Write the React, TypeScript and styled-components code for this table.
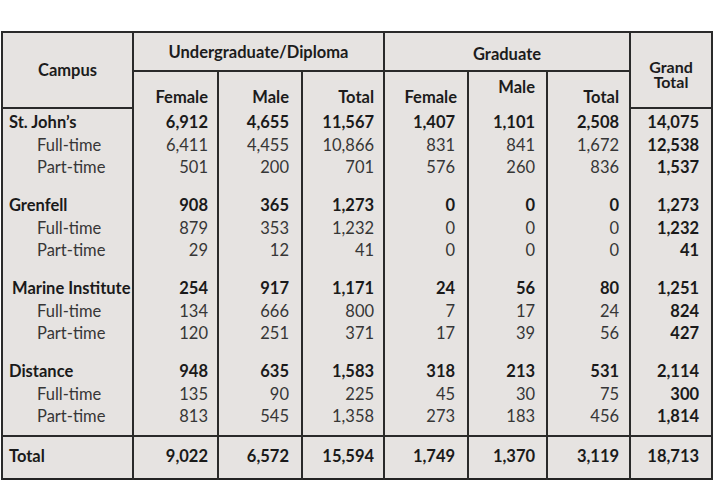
import React from "react";
import styled, { createGlobalStyle } from "styled-components";

const Global = createGlobalStyle`
  html, body { margin: 0; padding: 0; background: #ffffff; }
  body { font-family: Lato, "Open Sans", sans-serif; }
`;

const Page = styled.div`
  padding: 31px 0 0 1px;
`;

const Table = styled.table`
  border-collapse: collapse;
  table-layout: fixed;
  width: 710px;
  background: #e6e3e1;
  border: 2px solid #232323;
  font-size: 16.5px;
  color: #1c1c1c;
`;

const HeadRow = styled.tr<{ $h: number }>`
  height: ${(p) => p.$h}px;
`;

const HeadCell = styled.th<{ $pt?: number }>`
  border: 2px solid #2a2a2a;
  font-weight: 700;
  text-align: center;
  vertical-align: middle;
  padding: ${(p) => p.$pt ?? 0}px 0 0 0;
  line-height: 18px;
`;

const GrandHead = styled(HeadCell)`
  font-size: 16px;
  line-height: 15px;
`;

const SubHead = styled.th<{ $pr: number; $raise?: boolean }>`
  border-left: 2px solid #2a2a2a;
  border-right: 2px solid #2a2a2a;
  font-weight: 700;
  text-align: right;
  vertical-align: bottom;
  padding: 0 ${(p) => p.$pr}px ${(p) => (p.$raise ? 12 : 2)}px 0;
  line-height: 18px;
`;

const Row = styled.tr<{ $h: number }>`
  height: ${(p) => p.$h}px;
`;

const LabelCell = styled.td<{ $indent: number; $bold?: boolean }>`
  border-left: 2px solid #2a2a2a;
  border-right: 2px solid #2a2a2a;
  padding: 0 0 0 ${(p) => p.$indent}px;
  font-weight: ${(p) => (p.$bold ? 700 : 400)};
  color: ${(p) => (p.$bold ? "#1a1a1a" : "#363636")};
  white-space: nowrap;
  line-height: 18px;
`;

const NumCell = styled.td<{ $pr: number; $bold?: boolean }>`
  border-left: 2px solid #2a2a2a;
  border-right: 2px solid #2a2a2a;
  text-align: right;
  padding: 0 ${(p) => p.$pr}px 0 0;
  font-weight: ${(p) => (p.$bold ? 700 : 400)};
  color: ${(p) => (p.$bold ? "#1a1a1a" : "#363636")};
  line-height: 18px;
`;

const TotalRow = styled.tr`
  height: 43px;
  border-top: 2px solid #2a2a2a;
  & > td {
    vertical-align: top;
    padding-top: 10px;
  }
`;

const SpacerCell = styled.td`
  border-left: 2px solid #2a2a2a;
  border-right: 2px solid #2a2a2a;
  padding: 0;
`;

const widths = [131, 85, 84, 82, 84, 79, 83, 82];
const pads = [9, 12, 9, 12, 11, 10, 12];

type Line = { label: string; kind: "main" | "sub"; indent?: number; vals: string[] };

const groups: Line[][] = [
  [
    { label: "St. John\u2019s", kind: "main", vals: ["6,912", "4,655", "11,567", "1,407", "1,101", "2,508", "14,075"] },
    { label: "Full-time", kind: "sub", vals: ["6,411", "4,455", "10,866", "831", "841", "1,672", "12,538"] },
    { label: "Part-time", kind: "sub", vals: ["501", "200", "701", "576", "260", "836", "1,537"] },
  ],
  [
    { label: "Grenfell", kind: "main", vals: ["908", "365", "1,273", "0", "0", "0", "1,273"] },
    { label: "Full-time", kind: "sub", vals: ["879", "353", "1,232", "0", "0", "0", "1,232"] },
    { label: "Part-time", kind: "sub", vals: ["29", "12", "41", "0", "0", "0", "41"] },
  ],
  [
    { label: "Marine Institute", kind: "main", indent: 9, vals: ["254", "917", "1,171", "24", "56", "80", "1,251"] },
    { label: "Full-time", kind: "sub", vals: ["134", "666", "800", "7", "17", "24", "824"] },
    { label: "Part-time", kind: "sub", vals: ["120", "251", "371", "17", "39", "56", "427"] },
  ],
  [
    { label: "Distance", kind: "main", vals: ["948", "635", "1,583", "318", "213", "531", "2,114"] },
    { label: "Full-time", kind: "sub", vals: ["135", "90", "225", "45", "30", "75", "300"] },
    { label: "Part-time", kind: "sub", vals: ["813", "545", "1,358", "273", "183", "456", "1,814"] },
  ],
];

const totals = ["9,022", "6,572", "15,594", "1,749", "1,370", "3,119", "18,713"];

function Spacer({ h }: { h: number }) {
  return (
    <Row $h={h}>
      {widths.map((_, i) => (
        <SpacerCell key={i} />
      ))}
    </Row>
  );
}

export default function App() {
  return (
    <>
      <Global />
      <Page>
        <Table>
          <colgroup>
            {widths.map((w, i) => (
              <col key={i} style={{ width: w }} />
            ))}
          </colgroup>
          <thead>
            <HeadRow $h={39}>
              <HeadCell rowSpan={2}>Campus</HeadCell>
              <HeadCell colSpan={3} $pt={1}>Undergraduate/Diploma</HeadCell>
              <HeadCell colSpan={3} $pt={4}>Graduate</HeadCell>
              <GrandHead rowSpan={2} $pt={8}>
                Grand
                <br />
                Total
              </GrandHead>
            </HeadRow>
            <HeadRow $h={37}>
              <SubHead $pr={pads[0]}>Female</SubHead>
              <SubHead $pr={pads[1]}>Male</SubHead>
              <SubHead $pr={pads[2]}>Total</SubHead>
              <SubHead $pr={pads[3] - 2}>Female</SubHead>
              <SubHead $pr={pads[4]} $raise>Male</SubHead>
              <SubHead $pr={pads[5]}>Total</SubHead>
            </HeadRow>
          </thead>
          <tbody>
            <Spacer h={3} />
            {groups.map((g, gi) => (
              <React.Fragment key={gi}>
                {gi > 0 && <Spacer h={15.5} />}
                {g.map((line, li) => (
                  <Row $h={22.5} key={li}>
                    <LabelCell
                      $indent={line.indent ?? (line.kind === "main" ? 6 : 34)}
                      $bold={line.kind === "main"}
                    >
                      {line.label}
                    </LabelCell>
                    {line.vals.map((v, vi) => (
                      <NumCell key={vi} $pr={pads[vi]} $bold={line.kind === "main" || vi === 6}>
                        {v}
                      </NumCell>
                    ))}
                  </Row>
                ))}
              </React.Fragment>
            ))}
            <Spacer h={8.5} />
            <TotalRow>
              <LabelCell $indent={6} $bold>
                Total
              </LabelCell>
              {totals.map((v, vi) => (
                <NumCell key={vi} $pr={pads[vi]} $bold>
                  {v}
                </NumCell>
              ))}
            </TotalRow>
          </tbody>
        </Table>
      </Page>
    </>
  );
}
